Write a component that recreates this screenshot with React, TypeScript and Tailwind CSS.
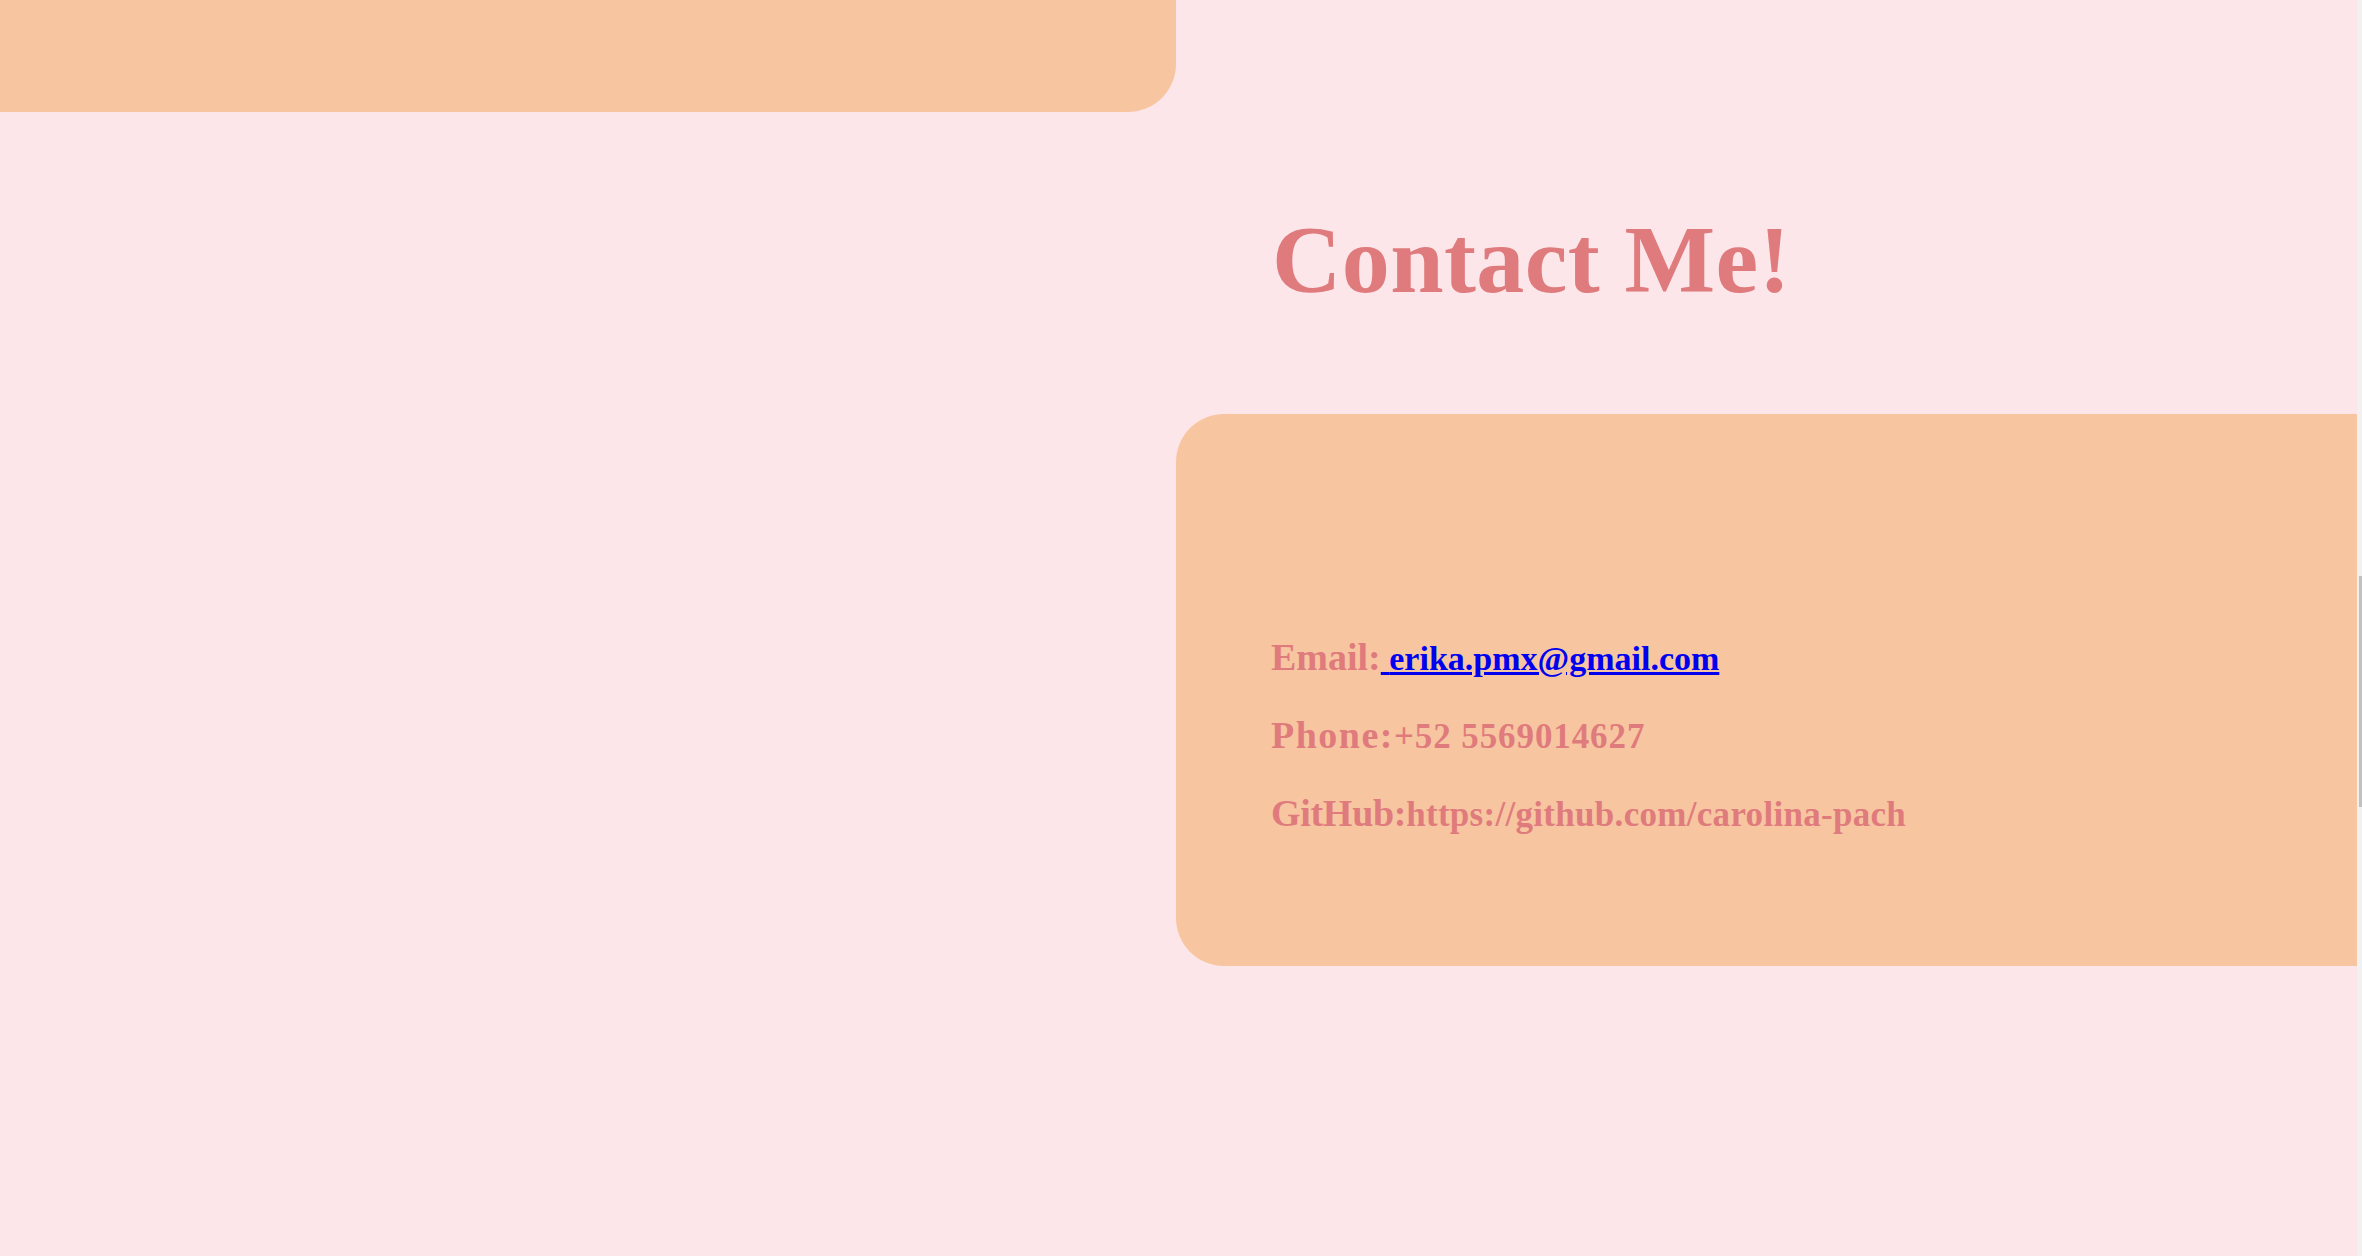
export default function App()
{
    return (
        <div className="flex h-[1256px] w-full overflow-hidden bg-[#fce6ea] font-['Liberation_Serif',serif] font-bold text-[#e07b7d]">
            <main className="flex flex-1 flex-col">
                {/* end of the section above */}
                <div className="h-[112px] w-[1176px] rounded-br-[48px] bg-[#f7c6a1]"></div>

                <section className="flex flex-col pt-[100px]">
                    <h1 className="ml-[1272px] text-[96px] leading-none tracking-[0.4px]">Contact Me!</h1>

                    <div className="ml-[1176px] mt-[106px] flex h-[552px] flex-col rounded-l-[48px] bg-[#f7c6a1] pl-[95px] pt-[205px]">
                        <p className="text-[38px] leading-[77px]">
                            Email:
                            <a href="mailto:erika.pmx@gmail.com" className="text-[34px] text-[#0000ee] underline">
                                {" "}erika.pmx@gmail.com
                            </a>
                        </p>
                        <p className="text-[38px] leading-[77px]">
                            <span className="tracking-[1.5px]">Phone:</span>
                            <span className="text-[35px] tracking-[0.9px]">+52 5569014627</span>
                        </p>
                        <p className="text-[38px] leading-[77px]">
                            <span className="tracking-[-0.3px]">GitHub:</span>
                            <span className="text-[35px] tracking-[0.3px]">https://github.com/carolina-pach</span>
                        </p>
                    </div>
                </section>
            </main>

            <div className="w-[5px] bg-[#f1f1f1] pl-[2px] pt-[576px]">
                <div className="h-[231px] w-[3px] bg-[#c1c1c1]"></div>
            </div>
        </div>
    )
}
